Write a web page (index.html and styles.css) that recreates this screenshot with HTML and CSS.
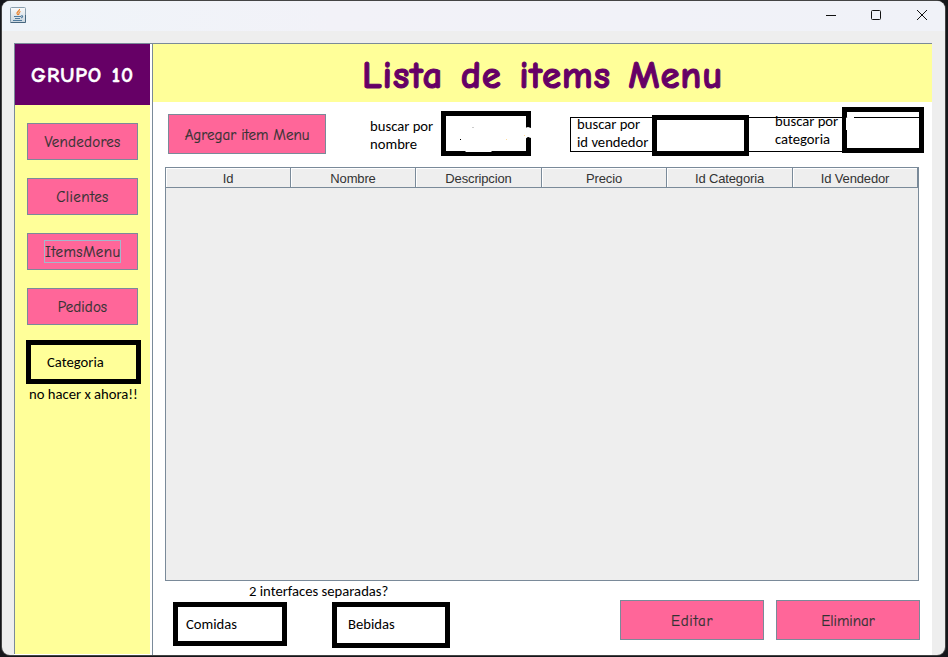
FILE: index.html
```
<!DOCTYPE html>
<html lang="es">
<head>
<meta charset="utf-8">
<title>Lista de items Menu</title>
<link rel="stylesheet" href="styles.css">
</head>
<body>
<div class="window">
  <header class="titlebar">
    <svg class="java" width="16" height="16" viewBox="0 0 16 16" fill="none">
      <defs><linearGradient id="g" x1="0" y1="0" x2="0" y2="1"><stop stop-color="#fbfbfb"/><stop offset="1" stop-color="#c9d6df"/></linearGradient></defs>
      <rect x=".5" y=".5" width="15" height="15" rx="1" fill="url(#g)" stroke="#8aa0af"/>
      <path d="M.5 15.500h15V8" stroke="#47677f"/>
      <path d="M9.500 2C10 4 6.500 4.500 7 6.500l1 1.500M10.500 4.500C8 5.500 9.500 6.500 8.500 8" stroke="#e9822b" stroke-width="1.200"/>
      <path d="M4 9.500h7M5 11.500h5M3 13.500h9M11 9c2-.8 2.500 1.300 0 2" stroke="#507b9d" stroke-width="1.100"/>
    </svg>
    <svg class="controls" width="110" height="16" viewBox="0 0 110 16" fill="none" stroke="#111">
      <path d="M1 8.500h10"/>
      <rect x="46.500" y="3.500" width="9" height="9" rx="1"/>
      <path d="M92 3l10 10M102 3L92 13"/>
    </svg>
  </header>
  <div class="client">
    <nav class="sidebar">
      <div class="brand"><span class="brand-text">GRUPO 10</span></div>
      <button class="btn nav"><span class="t-vend">Vendedores</span></button>
      <button class="btn nav"><span class="t-cli">Clientes</span></button>
      <button class="btn nav"><span class="focus">ItemsMenu</span></button>
      <button class="btn nav"><span class="t-ped">Pedidos</span></button>
      <div class="sketch category"><span>Categoria</span></div>
      <p class="note later">no hacer x ahora!!</p>
    </nav>
    <main class="content">
      <div class="heading"><h1>Lista de items Menu</h1></div>
      <section class="toolbar">
        <button class="btn add"><span>Agregar item Menu</span></button>
        <p class="note by-name">buscar por<br>nombre</p>
        <div class="sketch box-name">
          <svg width="90" height="45" viewBox="0 0 90 45">
            <path fill="#fff" d="M84 17l3-1 3 1v10l-3-1-3 2zM23 39h29l-2 2H25z"/>
            <path d="M87 26l2 2h-3z"/><path d="M19 28h1v1h-1z"/><path fill="#ccc" d="M31 16h2v1h-2z"/><path fill="#fd9" d="M65 28h1v1h-1zM83 24h1v1h-1z"/>
          </svg>
        </div>
        <p class="note by-vendor">buscar por<br>id vendedor</p>
        <div class="sketch box-vendor"></div>
        <p class="note by-category">buscar por<br>categoria</p>
        <div class="sketch box-category">
          <svg width="82" height="46" viewBox="0 0 82 46"><path d="M5 10.500h72" stroke="#000"/><path fill="#fff" d="M4 11l3-2h5v2L6 13v10H4z"/></svg>
        </div>
        <div class="outline"></div>
      </section>
      <section class="table">
        <div class="thead">
          <span>Id</span><span>Nombre</span><span>Descripcion</span><span>Precio</span><span>Id Categoria</span><span>Id Vendedor</span>
        </div>
      </section>
      <footer class="bottom">
        <div class="separate">
          <p class="note question">2 interfaces separadas?</p>
          <div class="choices">
            <div class="sketch food"><span>Comidas</span></div>
            <div class="sketch drinks"><span>Bebidas</span></div>
          </div>
        </div>
        <div class="actions">
          <button class="btn"><span class="t-edit">Editar</span></button>
          <button class="btn"><span class="t-del">Eliminar</span></button>
        </div>
      </footer>
    </main>
  </div>
</div>
</body>
</html>
```
FILE: styles.css
```
* { box-sizing: border-box; }
body { margin: 0; width: 948px; height: 657px; overflow: hidden; background: #15161a; padding: 1px 3px 2px 2px; }
p, h1 { margin: 0; }
.window { width: 943px; height: 654px; background: #eee; border-radius: 8px; overflow: hidden; box-shadow: 0 0 0 1px #444; }
.titlebar { height: 30px; background: linear-gradient(90deg, #eff4f9, #f2f2f8 35%, #f0f2f8); display: flex; justify-content: space-between; padding: 6px 14px 0 8px; }
.controls { margin-right: -4px; width: 110px; }
.client { display: flex; margin: 12px 13px 0 12px; height: 612px; background: #fff; border-top: 1px solid #7a8a99; width: 918px; }
.sidebar { width: 136px; border-left: 1px solid #7a8a99; background: #ff9; display: flex; flex-direction: column; height: 610px; }
.brand { height: 61px; background: #606; display: flex; align-items: center; justify-content: center; margin-bottom: 18px; color: #fff; }
.brand-text { font: bold 21px "Comic Sans MS", "Comic Neue", Lato, sans-serif; white-space: nowrap; letter-spacing: 1px; word-spacing: 1px; -webkit-text-stroke: .5px #fff; }
.btn { background: #f69; border: 1px solid #7a8a99; border-radius: 0; padding: 0; color: #333; font: 15px/22px "Comic Sans MS", "Comic Neue", Lato, sans-serif; -webkit-text-stroke: .2px #333; display: flex; align-items: center; justify-content: center; white-space: nowrap; }
.nav { width: 111px; height: 37px; margin: 0 0 18px 12px; flex: none; }
.t-vend { letter-spacing: .25px; }
.t-cli { letter-spacing: .4px; }
.t-ped { letter-spacing: .1px; }
.t-edit { letter-spacing: .7px; }
.focus { border: 1px solid #a3b8cc; width: 77px; height: 23px; line-height: 23px; letter-spacing: .4px; }
.sketch { border: 5px solid #000; font: 14.67px/18px Calibri, Carlito, Lato, sans-serif; color: #000; flex: none; }
.note { font: 14.67px/18px Calibri, Carlito, Lato, sans-serif; color: #000; white-space: nowrap; }
.category { width: 115px; height: 44px; margin: -3px 0 0 11px; padding: 8px 0 0 16px; }
.later { margin: 1px 0 0 14px; }
.content { width: 780px; margin-left: 2px; border-left: 1px solid #7a8a99; display: flex; flex-direction: column; }
.heading { height: 58px; background: #ff9; display: flex; align-items: center; justify-content: center; padding-top: 5px; }
h1 { color: #606; font: bold 39px/50px "Comic Sans MS", "Comic Neue", Lato, sans-serif; letter-spacing: .7px; word-spacing: 3px; white-space: nowrap; -webkit-text-stroke: 1px #606; }
.toolbar { height: 65px; display: flex; align-items: flex-start; position: relative; padding-left: 15px; }
.add { width: 158px; height: 40px; margin-top: 12px; padding-top: 2px; }
.by-name { width: 71px; margin: 15px 0 0 44px; }
.box-name { width: 90px; height: 45px; margin-top: 9px; }
.sketch svg { display: block; margin: -5px; }
.by-vendor { width: 75px; margin: 13px 0 0 46px; }
.box-vendor { width: 97px; height: 41px; margin-top: 13px; }
.by-category { width: 67px; margin: 10px 0 0 26px; }
.box-category { width: 82px; height: 46px; margin-top: 5px; background: #fff; position: relative; z-index: 1; }
.outline { position: absolute; left: 417px; top: 15px; width: 274px; height: 35px; border: 1px solid #000; border-right: 0; }
.table { width: 754px; height: 414px; margin-left: 12px; border: 1px solid #7a8a99; background: #eee; flex: none; }
.thead { height: 20px; display: grid; grid-template-columns: 125px 125px 126px 125px 126px 125px; border-bottom: 1px solid #7a8a99; }
.thead span { border-right: 1px solid #7a8a99; box-shadow: inset 1px 1px #fff; font: 13px/21px "Liberation Sans", Arial, sans-serif; letter-spacing: -.15px; height: 19px; color: #333; text-align: center; }
.bottom { display: flex; justify-content: space-between; padding: 0 12px 0 20px; }
.question { height: 18px; margin: 1px 0 2px 76px; }
.choices { display: flex; gap: 45px; }
.food { width: 114px; height: 44px; padding: 8px 0 0 8px; }
.drinks { width: 118px; height: 46px; padding: 8px 0 0 11px; }
.actions { display: flex; gap: 12px; padding-top: 19px; }
.actions .btn { width: 144px; height: 40px; padding-top: 1px; }
```
